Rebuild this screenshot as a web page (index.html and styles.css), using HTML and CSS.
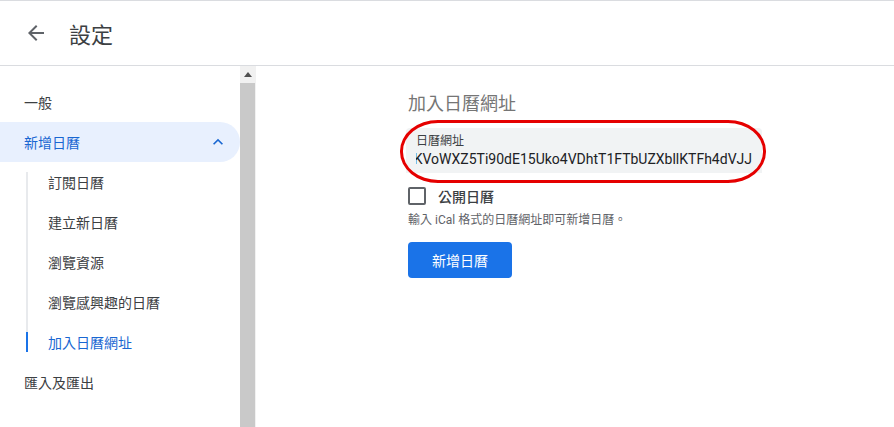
FILE: index.html
```html
<!DOCTYPE html>
<html lang="zh-Hant">
<head>
    <meta charset="UTF-8">
    <meta name="viewport" content="width=device-width, initial-scale=1.0">
    <title>設定</title>
    <link rel="stylesheet" href="styles.css">
</head>
<body>
    <header class="cabecalho">
        <button class="voltar" aria-label="返回">
            <svg width="24" height="24" viewBox="0 0 24 24"><path d="M20 11H7.83l5.59-5.59L12 4l-8 8 8 8 1.41-1.41L7.83 13H20v-2z" fill="#5f6368"/></svg>
        </button>
        <h1 class="titulo">設定</h1>
    </header>

    <div class="corpo">
        <nav class="menu">
            <div class="item">一般</div>
            <div class="item aberto">
                <span>新增日曆</span>
                <svg class="seta" width="20" height="20" viewBox="0 0 24 24"><path d="M7.41 15.41L12 10.83l4.59 4.58L18 14l-6-6-6 6z" fill="#1967d2"/></svg>
            </div>
            <div class="submenu">
                <div class="subitem">訂閱日曆</div>
                <div class="subitem">建立新日曆</div>
                <div class="subitem">瀏覽資源</div>
                <div class="subitem">瀏覽感興趣的日曆</div>
                <div class="subitem ativo">加入日曆網址</div>
            </div>
            <div class="item">匯入及匯出</div>
        </nav>

        <div class="rolagem">
            <div class="rolagem-botao">
                <svg width="8" height="5" viewBox="0 0 8 5"><path d="M0 5L4 0l4 5z" fill="#505050"/></svg>
            </div>
            <div class="rolagem-barra"></div>
        </div>

        <main class="conteudo">
            <h2 class="secao">加入日曆網址</h2>
            <div class="campo">
                <label class="campo-rotulo">日曆網址</label>
                <div class="campo-valor"><span>aHR0cHM6Ly9jYWxlbmRhci5nb29nbGUuY29tL2ljYWwvbXlfY2FsZW5kYXJfS1ZvV1haNVRpOTBkRTE1VWtvNFZEaHRUMUZUYlVaWGJsbEtURmg0ZFZKSg==KVoWXZ5Ti90dE15Uko4VDhtT1FTbUZXbllKTFh4dVJJ</span></div>
                <div class="marcacao"></div>
            </div>
            <label class="opcao">
                <span class="caixa"></span>
                <span>公開日曆</span>
            </label>
            <p class="ajuda">輸入 iCal 格式的日曆網址即可新增日曆。</p>
            <button class="botao">新增日曆</button>
        </main>
    </div>
</body>
</html>
```

FILE: styles.css
```css
body {
    margin: 0;
    font-family: Roboto, "Noto Sans CJK TC", sans-serif;
    color: #3c4043;
    background-color: #fff;
    border-top: 1px solid #dadce0;
    height: 426px;
    overflow: hidden;
}

.cabecalho {
    display: flex;
    align-items: center;
    height: 64px;
    border-bottom: 1px solid #dadce0;
}

.voltar {
    border: none;
    background: none;
    padding: 0;
    margin-left: 24px;
    width: 24px;
    height: 24px;
    display: flex;
    cursor: pointer;
}

.titulo {
    margin: 0 0 0 21px;
    font-size: 22px;
    font-weight: 400;
    color: #3c4043;
}

.corpo {
    display: flex;
    height: 361px;
}

.menu {
    width: 240px;
    padding-top: 16px;
    font-size: 14px;
}

.item {
    height: 40px;
    display: flex;
    align-items: center;
    justify-content: space-between;
    padding: 0 12px 0 24px;
}

.aberto {
    background-color: #e8f0fe;
    color: #1967d2;
    border-radius: 0 20px 20px 0;
}

.submenu {
    position: relative;
}

/* linha cinza da lista */
.submenu::before {
    content: "";
    position: absolute;
    left: 26px;
    top: 10px;
    bottom: 10px;
    width: 2px;
    background-color: #e8eaed;
}

.subitem {
    position: relative;
    height: 40px;
    display: flex;
    align-items: center;
    padding-left: 48px;
}

.subitem.ativo {
    color: #1967d2;
}

.subitem.ativo::before {
    content: "";
    position: absolute;
    left: 26px;
    top: 10px;
    height: 20px;
    width: 2px;
    background-color: #1a73e8;
}

.rolagem {
    width: 16px;
    background-color: #f1f1f1;
    display: flex;
    flex-direction: column;
}

.rolagem-botao {
    height: 17px;
    display: flex;
    align-items: center;
    justify-content: center;
}

.rolagem-barra {
    flex: 1;
    width: 15px;
    background-color: #c9c9c9;
}

.conteudo {
    flex: 1;
    padding: 26px 0 0 152px;
}

.secao {
    margin: 0 0 12px;
    font-size: 18px;
    font-weight: 400;
    color: #757575;
    line-height: 24px;
}

.campo {
    position: relative;
    width: 336px;
    height: 45px;
    margin-left: -2px;
    padding: 0 10px;
    background-color: #f1f3f4;
    border-radius: 4px 4px 0 0;
    display: flex;
    flex-direction: column;
    justify-content: center;
}

.campo-rotulo {
    font-size: 12px;
    color: #3c4043;
    line-height: 16px;
}

.campo-valor {
    display: flex;
    justify-content: flex-end;
    overflow: hidden;
    white-space: nowrap;
    font-size: 14px;
    line-height: 20px;
    color: #202124;
}

/* anotação vermelha em volta do campo */
.marcacao {
    position: absolute;
    left: -6px;
    top: -8px;
    width: 360px;
    height: 57px;
    border: 3px solid #e50000;
    border-radius: 38px / 31px;
}

.opcao {
    display: flex;
    align-items: center;
    gap: 12px;
    margin-top: 13px;
    font-size: 14px;
    font-weight: 500;
    color: #3c4043;
}

.caixa {
    width: 14px;
    height: 14px;
    border: 2px solid #5f6368;
    border-radius: 2px;
}

.ajuda {
    margin: 5px 0 0;
    font-size: 12px;
    color: #5f6368;
    line-height: 18px;
}

.botao {
    margin-top: 13px;
    height: 36px;
    padding: 0 24px;
    border: none;
    border-radius: 4px;
    background-color: #1a73e8;
    color: #fff;
    font-family: inherit;
    font-size: 14px;
    cursor: pointer;
}
```
